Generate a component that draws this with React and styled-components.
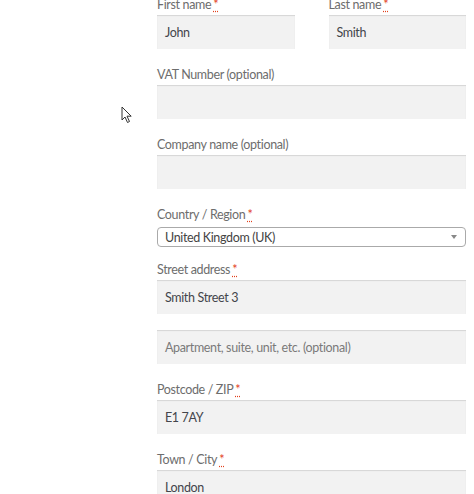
import styled, { createGlobalStyle } from "styled-components";

const GlobalStyle = createGlobalStyle`
  html, body {
    margin: 0;
    padding: 0;
    background: #ffffff;
    overflow: hidden;
  }
  body {
    font-family: Lato, "Liberation Sans", sans-serif;
    width: 474px;
    height: 494px;
  }
`;

const Page = styled.div`
  position: relative;
  width: 474px;
  height: 494px;
  overflow: hidden;
`;

const Form = styled.form`
  margin-top: -6px;
  padding-left: 157px;
  width: 309px;
  display: flex;
  flex-direction: column;
`;

const Row = styled.div`
  display: flex;
  gap: 34px;
`;

const Field = styled.div`
  flex: 1;
  display: flex;
  flex-direction: column;
  margin-bottom: ${(p) => p.$mb ?? 15}px;
`;

const Label = styled.label`
  height: 21px;
  line-height: 21px;
  font-size: 12.5px;
  letter-spacing: -0.35px;
  color: #6d6d6d;
`;

const Required = styled.abbr`
  color: #e2401c;
  text-decoration: underline dotted;
  text-underline-offset: 2px;
  margin-left: 2px;
`;

const Input = styled.div`
  box-sizing: border-box;
  height: 34px;
  background: #f2f2f2;
  box-shadow: inset 0 1px 1px rgba(0, 0, 0, 0.12);
  padding: 0 8px;
  display: flex;
  align-items: center;
  font-size: 12.5px;
  letter-spacing: -0.35px;
  color: ${(p) => (p.$placeholder ? "#7a7a7a" : "#43454b")};
`;

const Select = styled.div`
  box-sizing: border-box;
  height: 20px;
  margin-top: 2px;
  border: 1px solid #aaaaaa;
  border-radius: 4px;
  padding: 0 8px 0 7px;
  display: flex;
  align-items: center;
  justify-content: space-between;
  font-size: 12.5px;
  letter-spacing: -0.35px;
  color: #444444;
`;

const Caret = styled.span`
  width: 0;
  height: 0;
  border-left: 3px solid transparent;
  border-right: 3px solid transparent;
  border-top: 4px solid #888888;
`;

const Cursor = styled.svg`
  position: absolute;
  left: 121px;
  top: 106px;
`;

function FieldLabel({ children, required }) {
  return (
    <Label>
      {children}
      {required && <Required title="required">*</Required>}
    </Label>
  );
}

export default function App() {
  return (
    <Page>
      <GlobalStyle />
      <Form>
        <Row>
          <Field>
            <FieldLabel required>First name</FieldLabel>
            <Input>John</Input>
          </Field>
          <Field>
            <FieldLabel required>Last name</FieldLabel>
            <Input>Smith</Input>
          </Field>
        </Row>
        <Field>
          <FieldLabel>VAT Number (optional)</FieldLabel>
          <Input />
        </Field>
        <Field>
          <FieldLabel>Company name (optional)</FieldLabel>
          <Input />
        </Field>
        <Field $mb={12}>
          <FieldLabel required>Country / Region</FieldLabel>
          <Select>
            United Kingdom (UK)
            <Caret />
          </Select>
        </Field>
        <Field $mb={16}>
          <FieldLabel required>Street address</FieldLabel>
          <Input>Smith Street 3</Input>
        </Field>
        <Field>
          <Input $placeholder>Apartment, suite, unit, etc. (optional)</Input>
        </Field>
        <Field>
          <FieldLabel required>Postcode / ZIP</FieldLabel>
          <Input>E1 7AY</Input>
        </Field>
        <Field>
          <FieldLabel required>Town / City</FieldLabel>
          <Input>London</Input>
        </Field>
      </Form>
      <Cursor width="12" height="18" viewBox="0 0 12 18">
        <path
          d="M1 1 L1 14 L4 11 L6.5 16.5 L8.5 15.5 L6 10.2 L10.2 10.2 Z"
          fill="#ffffff"
          stroke="#333333"
          strokeWidth="1"
          strokeLinejoin="round"
        />
      </Cursor>
    </Page>
  );
}
